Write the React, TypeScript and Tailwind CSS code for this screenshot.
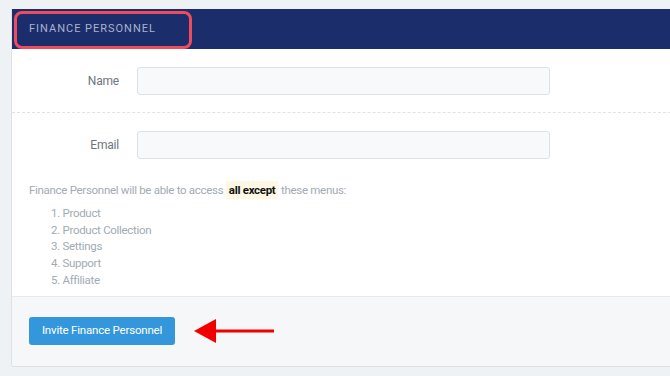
const menus = ["Product", "Product Collection", "Settings", "Support", "Affiliate"];

export default function App() {
  return (
    <div
      className="h-[376px] w-[670px] overflow-hidden bg-[#eef2f5] pl-[11px] pt-[9px]"
      style={{ fontFamily: "Roboto, 'Open Sans', sans-serif" }}
    >
      <div className="w-[680px] overflow-hidden rounded-b-[3px] border-l border-b border-[#dde2e7] bg-white">
        <div className="relative flex h-10 items-center bg-[#1b2d6b] pl-[17px]">
          <span className="text-[11px] tracking-[0.09em] text-[#a9b3cb]">FINANCE PERSONNEL</span>
          <div className="absolute left-[2px] top-[2px] h-[38px] w-[178px] rounded-[8px] border-[3px] border-[#ee4b5c]" />
        </div>

        <FieldRow label="Name" />
        <div className="border-t border-dashed border-[#dfe3e8]" />
        <FieldRow label="Email" />

        <div className="px-[17px] pb-[7px] pt-[4px] text-[11.5px] tracking-[-0.3px] text-[#a2abb3]">
          <p className="leading-[20px]">
            Finance Personnel will be able to access{" "}
            <span className="bg-[#fdf7e4] px-[3px] py-[2px] font-bold text-[#111]">all except</span>{" "}
            these menus:
          </p>
          <ol className="mt-[5px] pl-[22px] leading-[16.7px]">
            {menus.map((m, i) => (
              <li key={m}>
                {i + 1}. {m}
              </li>
            ))}
          </ol>
        </div>

        <div className="flex h-[70px] items-center gap-[19px] border-t border-[#e6e9ed] bg-[#f5f7f9] pl-[17px]">
          <button className="h-[28px] w-[146px] rounded-[3px] bg-[#3597db] text-[11.5px] tracking-[-0.2px] text-white">
            Invite Finance Personnel
          </button>
          <svg width="82" height="26" viewBox="0 0 82 26">
            <path d="M22 11.5 H80 V14.5 H22 Z" fill="#f20000" />
            <path d="M0 13 L22 1 L22 25 Z" fill="#f20000" />
          </svg>
        </div>
      </div>
    </div>
  );
}

function FieldRow({ label }: { label: string }) {
  return (
    <div className="flex h-[63px] items-center">
      <label className="w-[107px] text-right text-[12px] tracking-[-0.2px] text-[#6d757d]">{label}</label>
      <input className="ml-[18px] h-[28px] w-[413px] rounded-[3px] border border-[#dde1e6] bg-[#f8f9fb]" />
    </div>
  );
}
